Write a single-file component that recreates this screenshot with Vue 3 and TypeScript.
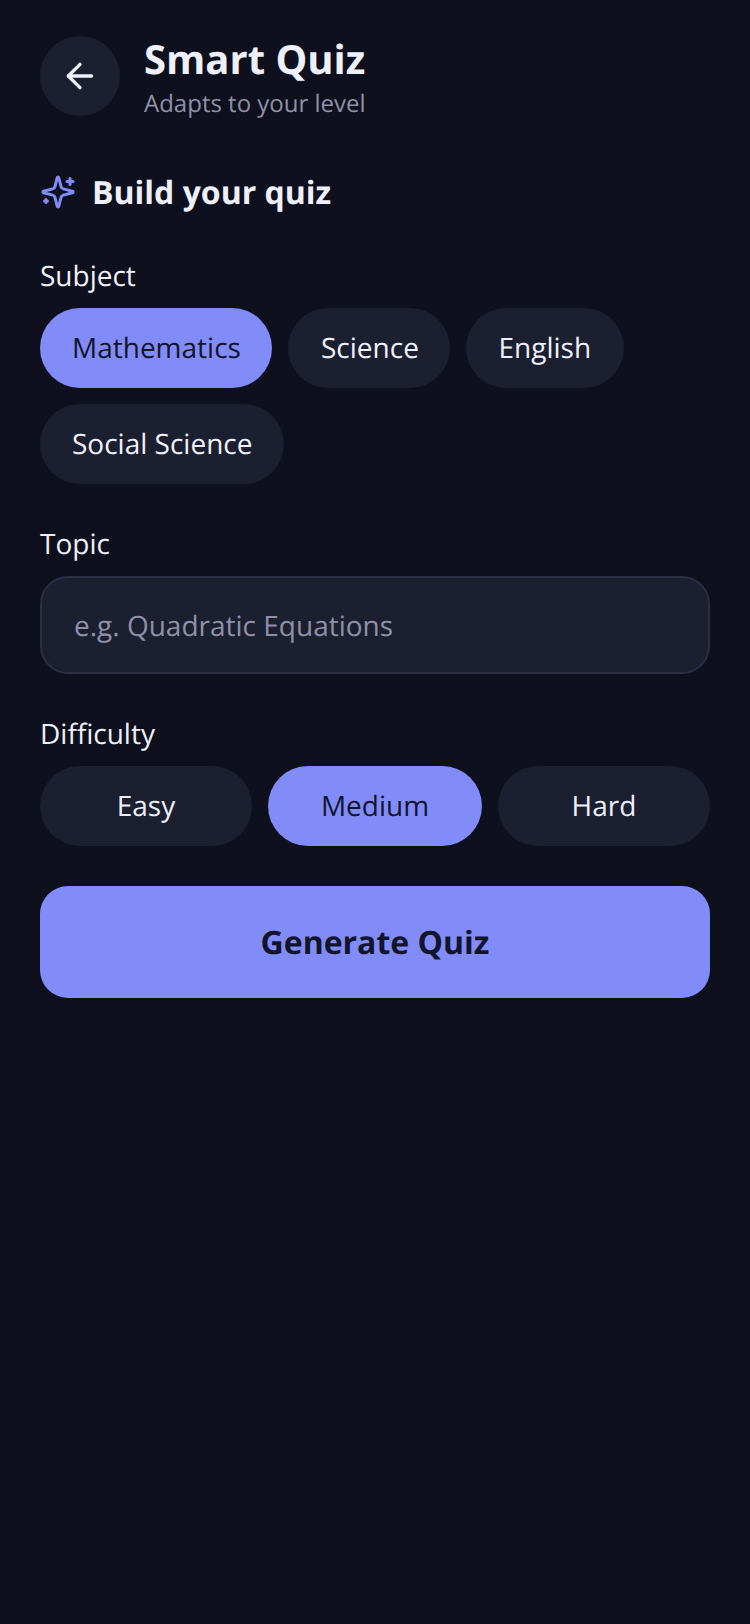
<script setup lang="ts">
import { ref } from 'vue';

const subjects = [
    { name: 'Mathematics', width: 232, pad: 32 },
    { name: 'Science', width: 162, pad: 33 },
    { name: 'English', width: 158, pad: 32.5 },
    { name: 'Social Science', width: 244, pad: 32 },
];
const levels = ['Easy', 'Medium', 'Hard'];

const subject = ref('Mathematics');
const level = ref('Medium');
const topic = ref('');
</script>

<template>
    <div class="page">
        <header class="header">
            <button class="back" type="button" aria-label="Back">
                <svg width="40" height="40" viewBox="0 0 24 24" fill="none" stroke="#eef0fb" stroke-width="2" stroke-linecap="round" stroke-linejoin="round">
                    <path d="m12 19-7-7 7-7" />
                    <path d="M19 12H5" />
                </svg>
            </button>
            <div class="titles">
                <h1 class="title">Smart Quiz</h1>
                <p class="subtitle">Adapts to your level</p>
            </div>
        </header>

        <div class="build">
            <svg class="build-icon" width="36" height="36" viewBox="0 0 24 24" fill="none" stroke="#818cf8" stroke-width="2" stroke-linecap="round" stroke-linejoin="round">
                <path d="M9.937 15.5A2 2 0 0 0 8.5 14.063l-6.135-1.582a.5.5 0 0 1 0-.962L8.5 9.936A2 2 0 0 0 9.937 8.5l1.582-6.135a.5.5 0 0 1 .963 0L14.063 8.5A2 2 0 0 0 15.5 9.937l6.135 1.581a.5.5 0 0 1 0 .964L15.5 14.063a2 2 0 0 0-1.437 1.437l-1.582 6.135a.5.5 0 0 1-.963 0z" />
                <path d="M20 3v4" />
                <path d="M22 5h-4" />
                <path d="M4 17v2" />
                <path d="M5 18H3" />
            </svg>
            <h2 class="build-title">Build your quiz</h2>
        </div>

        <label class="label label-subject">Subject</label>
        <div class="chips">
            <button
                v-for="item in subjects"
                :key="item.name"
                class="chip subject"
                :class="{ active: subject === item.name }"
                :style="{ width: item.width + 'px', paddingLeft: item.pad + 'px' }"
                type="button"
                @click="subject = item.name"
            >{{ item.name }}</button>
        </div>

        <label class="label label-topic">Topic</label>
        <input v-model="topic" class="input" type="text" placeholder="e.g. Quadratic Equations" />

        <label class="label label-level">Difficulty</label>
        <div class="levels">
            <button
                v-for="item in levels"
                :key="item"
                class="chip level"
                :class="{ active: level === item }"
                type="button"
                @click="level = item"
            >{{ item }}</button>
        </div>

        <button class="generate" type="button">Generate Quiz</button>
    </div>
</template>

<style>
html, body {
    margin: 0;
    background: #0e101d;
}
</style>

<style scoped>
.page {
    box-sizing: border-box;
    width: 750px;
    height: 1624px;
    padding: 32px 40px 0;
    background: #0e101d;
    font-family: "Open Sans", sans-serif;
    text-rendering: geometricPrecision;
    color: #eef0fb;
    display: flex;
    flex-direction: column;
    align-items: stretch;
}

button {
    font-family: inherit;
    text-rendering: inherit;
    border: none;
    padding: 0;
    cursor: pointer;
}

.header {
    display: flex;
    align-items: center;
    gap: 24px;
}

.back {
    width: 80px;
    height: 80px;
    border-radius: 50%;
    background: #1c1f30;
    display: flex;
    align-items: center;
    justify-content: center;
}

.title {
    margin: 0;
    font-size: 40px;
    line-height: 54px;
    font-weight: 700;
    color: #eef0fb;
}

.subtitle {
    margin: 1px 0 -1px;
    font-size: 24px;
    line-height: 33px;
    color: #8f91a9;
}

.build {
    display: flex;
    align-items: center;
    gap: 16px;
    margin-top: 51px;
}

.build-icon {
    margin-bottom: 2px;
}

.build-title {
    margin: 0;
    font-size: 32px;
    line-height: 46px;
    font-weight: 700;
    color: #eef0fb;
}

.label {
    display: block;
    font-size: 28px;
    line-height: 40px;
    color: #eef0fb;
}

.label-subject {
    margin-top: 40px;
}

.label-topic,
.label-level {
    margin-top: 40px;
}

.chips {
    display: flex;
    flex-wrap: wrap;
    gap: 16px;
    margin-top: 12px;
}

.chip {
    height: 80px;
    border-radius: 40px;
    background: #1c1f30;
    color: #eef0fb;
    font-size: 28px;
}

.subject {
    text-align: left;
    white-space: nowrap;
}

.chip.active {
    background: #818cf8;
    color: #12142b;
}

.input {
    box-sizing: border-box;
    width: 100%;
    height: 98px;
    margin-top: 12px;
    padding: 2px 32px 0;
    border: 2px solid #2b2e45;
    border-radius: 28px;
    background: #1c1f30;
    color: #eef0fb;
    font-family: inherit;
    text-rendering: inherit;
    font-size: 28px;
    outline: none;
}

.input::placeholder {
    color: #8f91a9;
    opacity: 1;
}

.levels {
    display: grid;
    grid-template-columns: 1fr 214px 1fr;
    gap: 16px;
    margin-top: 12px;
}

.generate {
    height: 112px;
    margin-top: 40px;
    border-radius: 28px;
    background: #818cf8;
    color: #12142b;
    font-size: 32px;
    font-weight: 700;
}
</style>
